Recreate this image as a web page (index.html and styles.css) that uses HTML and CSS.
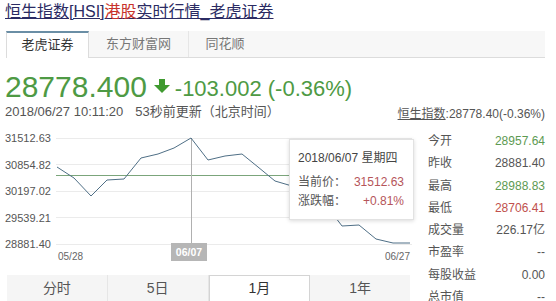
FILE: index.html
```html
<!DOCTYPE html>
<html>
<head lang="zh-CN">
    <meta charset="UTF-8">
    <title>恒生指数[HSI]港股实时行情</title>
    <link rel="stylesheet" href="styles.css">
</head>
<body>
<div class="page">
    <h1 class="title"><a href="#">恒生指数[HSI]<em>港股</em>实时行情_老虎证券</a></h1>

    <ul class="tabs">
        <li class="current">老虎证券</li>
        <li>东方财富网</li>
        <li>同花顺</li>
    </ul>

    <div class="quote">
        <span class="price">28778.400</span><svg class="arrow" width="16" height="14" viewBox="0 0 16 14"><path d="M5 0h6v6h5l-8 8l-8-8h5z" fill="#3f9a2f"/></svg><span class="change">-103.002 (-0.36%)</span>
    </div>

    <div class="meta">
        <span class="time">2018/06/27 10:11:20<span class="ago">53秒前更新（北京时间）</span></span>
        <span class="index"><a href="#">恒生指数</a>:28778.40(-0.36%)</span>
    </div>

    <div class="main">
        <div class="chart-box">
            <div class="chart">
                <svg width="407" height="155" viewBox="5 120 407 155">
                    <g stroke="#ebebeb" stroke-width="1">
                        <line x1="56" y1="138.5" x2="412" y2="138.5"/>
                        <line x1="56" y1="164.5" x2="412" y2="164.5"/>
                        <line x1="56" y1="191.5" x2="412" y2="191.5"/>
                        <line x1="56" y1="217.5" x2="412" y2="217.5"/>
                        <line x1="56" y1="244.5" x2="412" y2="244.5"/>
                    </g>
                    <line x1="56" y1="175.5" x2="412" y2="175.5" stroke="#7ba57b" stroke-width="1"/>
                    <g class="axis" fill="#555">
                        <text x="5" y="142">31512.63</text>
                        <text x="5" y="169">30854.82</text>
                        <text x="5" y="195">30197.02</text>
                        <text x="5" y="222">29539.21</text>
                        <text x="5" y="248">28881.40</text>
                    </g>
                    <line x1="191.5" y1="138" x2="191.5" y2="250" stroke="#b0b0b0" stroke-width="1"/>
                    <polyline fill="none" stroke="#4f6f86" stroke-width="1"
                              points="57,167 74,178 91,196 107,180 124,179 141,158 158,154 174,148 191,138 208,160 225,156 242,154 258,167 275,181 292,186 309,195 326,205 342,226 359,225 376,239 393,243 410,243"/>
                    <rect x="171" y="243" width="36" height="18" fill="#b6b6b6"/>
                    <text class="mark" x="189" y="256" text-anchor="middle" fill="#fff">06/07</text>
                    <g class="dates" fill="#666">
                        <text x="58" y="260">05/28</text>
                        <text x="410" y="260" text-anchor="end">06/27</text>
                    </g>
                </svg>
                <div class="tip">
                    <p class="tip-date">2018/06/07 星期四</p>
                    <p class="tip-row"><span>当前价：</span><b>31512.63</b></p>
                    <p class="tip-row"><span>涨跌幅：</span><b>+0.81%</b></p>
                </div>
            </div>
            <ol class="periods">
                <li>分时</li>
                <li>5日</li>
                <li class="current">1月</li>
                <li>1年</li>
            </ol>
        </div>

        <dl class="stats">
            <div class="row"><dt>今开</dt><dd class="up">28957.64</dd></div>
            <div class="row"><dt>昨收</dt><dd>28881.40</dd></div>
            <div class="row"><dt>最高</dt><dd class="up">28988.83</dd></div>
            <div class="row"><dt>最低</dt><dd class="down">28706.41</dd></div>
            <div class="row"><dt>成交量</dt><dd>226.17亿</dd></div>
            <div class="row"><dt>市盈率</dt><dd>--</dd></div>
            <div class="row"><dt>每股收益</dt><dd>0.00</dd></div>
            <div class="row"><dt>总市值</dt><dd>--</dd></div>
        </dl>
    </div>
</div>
</body>
</html>
```

FILE: styles.css
```css
* {
    padding: 0;
    margin: 0;
    list-style: none;
    box-sizing: border-box;
}
body {
    font-family: "Liberation Sans", "Noto Sans CJK SC", sans-serif;
    color: #555;
    background-color: #fff;
}
.page {
    width: 556px;
    height: 301px;
    padding: 1px 11px 0 5px;
    overflow: hidden;
}
.title {
    font-size: 16px;
    font-weight: normal;
    line-height: 22px;
}
.title a {
    color: #2b2b63;
    text-decoration: underline;
}
.title em {
    font-style: normal;
    color: #c8322b;
}
.tabs {
    display: flex;
    height: 27px;
    margin: 8px 0 0 1px;
    background-color: #f7f7f7;
    border-bottom: 1px solid #dcdcdc;
}
.tabs li {
    font-size: 13px;
    line-height: 26px;
    text-align: center;
    color: #777;
    border-right: 1px solid #e6e6e6;
}
.tabs li:nth-child(1) {
    width: 83px;
}
.tabs li:nth-child(2) {
    width: 100px;
}
.tabs li:nth-child(3) {
    width: 72px;
    border-right: none;
}
.tabs .current {
    height: 27px;
    line-height: 24px;
    color: #333;
    background-color: #fff;
    border-top: 2px solid #6a8ea5;
    border-left: 1px solid #dcdcdc;
    border-right: 1px solid #dcdcdc;
    margin-bottom: -1px;
}
.quote {
    height: 34px;
    line-height: 34px;
    margin-top: 12px;
    color: #4e9a44;
    white-space: nowrap;
}
.price {
    font-size: 30px;
}
.arrow {
    margin: 0 5px 4px 7px;
}
.change {
    font-size: 22px;
    vertical-align: 1px;
}
.meta {
    display: flex;
    justify-content: space-between;
    height: 16px;
    line-height: 16px;
}
.time {
    font-size: 13px;
}
.ago {
    margin-left: 12px;
}
.index {
    font-size: 12px;
    padding-top: 2px;
}
.index a {
    color: #555;
}
.main {
    display: flex;
}
.chart-box {
    width: 407px;
}
.chart {
    position: relative;
    height: 155px;
}
.chart svg {
    display: block;
}
.axis {
    font-size: 11px;
}
.dates {
    font-size: 10px;
}
.mark {
    font-size: 10.5px;
    font-weight: bold;
}
.tip {
    position: absolute;
    left: 284px;
    top: 19px;
    width: 125px;
    padding: 10px 9px 9px 8px;
    background-color: #fff;
    border: 1px solid #e2e2e2;
    box-shadow: 0 1px 4px rgba(0, 0, 0, .15);
    font-size: 12px;
}
.tip-date {
    line-height: 16px;
    color: #444;
}
.tip-row {
    display: flex;
    justify-content: space-between;
    line-height: 18px;
    margin-top: 1px;
}
.tip-date + .tip-row {
    margin-top: 7px;
}
.tip-row b {
    font-weight: normal;
    color: #b5555a;
}
.periods {
    display: flex;
    width: 403px;
    height: 26px;
    margin-left: 2px;
    background-color: #f5f5f5;
}
.periods li {
    flex: 1;
    font-size: 14px;
    line-height: 26px;
    text-align: center;
    color: #555;
    border-right: 1px solid #e6e6e6;
}
.periods li:last-child {
    border-right: none;
}
.periods .current {
    color: #333;
    background-color: #fff;
    border: 1px solid #d4d4d4;
    border-bottom: none;
    line-height: 24px;
}
.stats {
    width: 117px;
    margin-left: 16px;
    padding-top: 10px;
    font-size: 12px;
}
.stats .row {
    display: flex;
    justify-content: space-between;
    line-height: 22.3px;
}
.stats dt {
    color: #555;
}
.stats dd {
    color: #555;
}
.stats .up {
    color: #5d9a52;
}
.stats .down {
    color: #c0504d;
}
```
